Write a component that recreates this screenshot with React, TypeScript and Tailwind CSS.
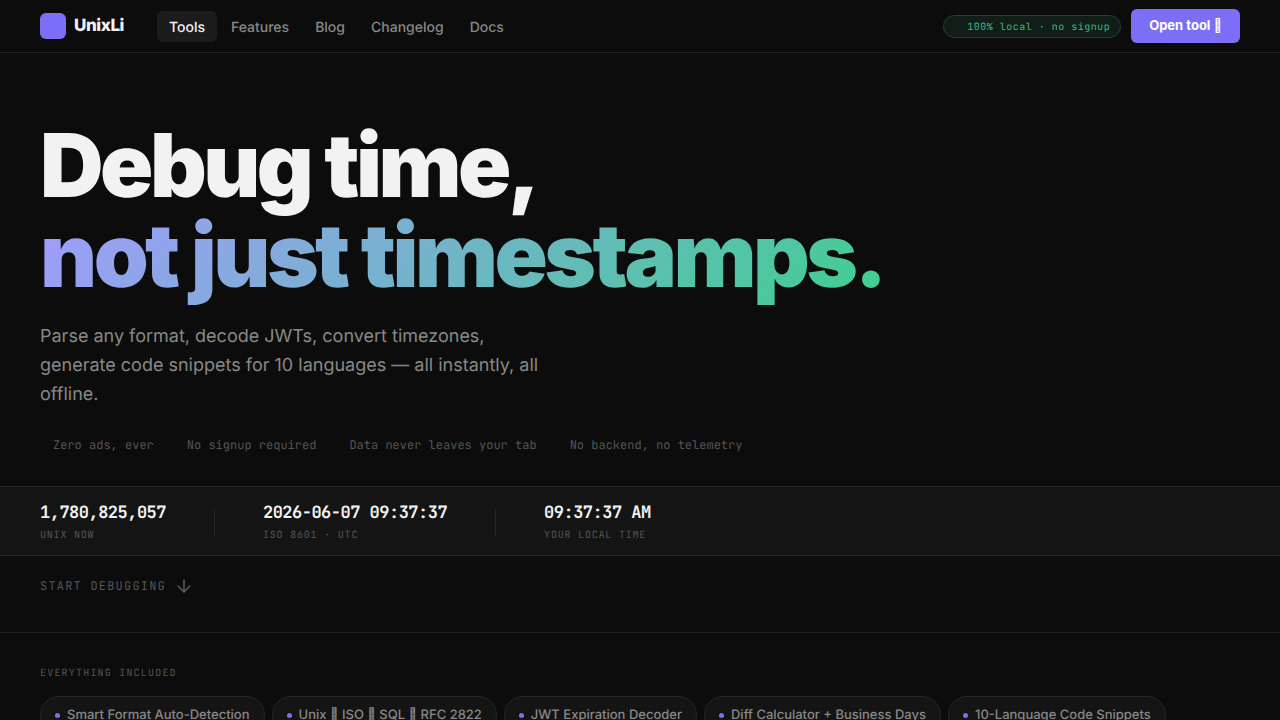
import { useState } from "react";
import { ArrowDown } from "lucide-react";

const NAV_LINKS = ["Tools", "Features", "Blog", "Changelog", "Docs"];

const TRUST_POINTS = [
  "Zero ads, ever",
  "No signup required",
  "Data never leaves your tab",
  "No backend, no telemetry",
];

const CLOCKS = [
  { label: "Unix now", value: "1,780,825,057" },
  { label: "ISO 8601 · UTC", value: "2026-06-07 09:37:37" },
  { label: "Your local time", value: "09:37:37 AM" },
];

const FEATURES = [
  "Smart Format Auto-Detection",
  "Unix \u{10FFFD} ISO \u{10FFFD} SQL \u{10FFFD} RFC 2822",
  "JWT Expiration Decoder",
  "Diff Calculator + Business Days",
  "10-Language Code Snippets",
];

function Header() {
  const [active, setActive] = useState("Tools");

  return (
    <header className="flex h-[53px] items-center justify-between border-b border-[#222222] px-10">
      <div className="flex items-center gap-[33px]">
        <a href="#top" className="flex items-center gap-2">
          <span className="size-[26px] rounded-md bg-[#7c6ff7]" />
          <span className="text-[17px] leading-6 font-extrabold tracking-tight text-[#f2f2f2]">UnixLi</span>
        </a>
        <nav className="flex gap-0.5">
          {NAV_LINKS.map((link) => (
            <a
              key={link}
              href={`#${link.toLowerCase()}`}
              onClick={() => setActive(link)}
              className={`rounded-md px-3 pt-1.5 pb-1 text-sm leading-[21px] font-medium ${
                active === link ? "bg-[#1c1c1c] text-[#f2f2f2]" : "text-[#888888] hover:text-[#f2f2f2]"
              }`}
            >
              {link}
            </a>
          ))}
        </nav>
      </div>
      <div className="flex items-center gap-2.5">
        <span className="rounded-full border border-[#1d4533] bg-[#111d17] py-[3px] pr-2.5 pl-[23px] font-[JetBrains_Mono,DejaVu_Sans_Mono,monospace] text-[10px] leading-[15px] tracking-wider text-[#3fb984]">
          100% local · no signup
        </span>
        <button type="button" className="h-[34px] rounded-md bg-[#7c6ff7] px-[18px] text-[13px] font-bold text-white">
          Open tool {"\u{10FFFD}"}
        </button>
      </div>
    </header>
  );
}

function Hero() {
  return (
    <section className="px-10 pt-[68px] pb-8">
      <h1 className="text-[88px] leading-[90px] font-black tracking-[-0.04em] text-[#f2f2f2]">
        Debug time,
        <br />
        <span className="bg-[linear-gradient(135deg,#a29bfe,#3ecf8e)] bg-clip-text text-transparent">
          not just timestamps.
        </span>
      </h1>
      <p className="mt-[21px] max-w-[520px] text-lg leading-[29px] text-[#888888]">
        Parse any format, decode JWTs, convert timezones, generate code snippets for 10 languages — all instantly, all
        offline.
      </p>
      <ul className="mt-[27px] flex flex-wrap gap-5 font-[JetBrains_Mono,DejaVu_Sans_Mono,monospace] text-xs leading-[18px] text-[#555555]">
        {TRUST_POINTS.map((point) => (
          <li key={point} className="pl-[13px]">
            {point}
          </li>
        ))}
      </ul>
    </section>
  );
}

function ClockStrip() {
  return (
    <section className="flex items-center gap-12 border-y border-[#272727] bg-[#141414] px-10 pt-[13px] pb-[11px] font-[JetBrains_Mono,DejaVu_Sans_Mono,monospace]">
      {CLOCKS.map((clock, i) => (
        <div key={clock.label} className="flex items-center gap-12">
          {i > 0 && <span className="h-[26px] w-px bg-[#272727]" />}
          <div>
            <p className="text-[17px] leading-[26px] font-semibold tracking-[-0.03em] text-[#f2f2f2]">{clock.value}</p>
            <p className="text-[10px] leading-[18px] tracking-[0.08em] text-[#555555] uppercase">{clock.label}</p>
          </div>
        </div>
      ))}
    </section>
  );
}

export default function App() {
  return (
    <div
      id="top"
      className="min-h-screen bg-[#0c0c0c] font-[Inter,sans-serif] antialiased [text-rendering:geometricPrecision]"
    >
      <Header />
      <main>
        <Hero />
        <ClockStrip />
        <div className="border-b border-[#222222] px-10 pt-[18px] pb-[34px]">
          <a
            href="#tools"
            className="flex w-fit items-center gap-2 font-[JetBrains_Mono,DejaVu_Sans_Mono,monospace] text-xs leading-6 tracking-widest text-[#555555] uppercase"
          >
            Start debugging
            <ArrowDown className="size-5" />
          </a>
        </div>
        <section className="px-10 pt-[33px] pb-12">
          <h2 className="font-[JetBrains_Mono,DejaVu_Sans_Mono,monospace] text-[10px] leading-[14px] tracking-[0.12em] text-[#555555] uppercase">
            Everything included
          </h2>
          <ul className="mt-4 flex flex-wrap gap-[7px]">
            {FEATURES.map((feature) => (
              <li
                key={feature}
                className="flex items-center gap-[7px] rounded-full border border-[#272727] bg-[#141414] px-3.5 py-2 text-[13px] leading-5 font-medium text-[#888888]"
              >
                <span className="size-[5px] rounded-full bg-[#7c6ff7]" />
                {feature}
              </li>
            ))}
          </ul>
        </section>
      </main>
    </div>
  );
}
